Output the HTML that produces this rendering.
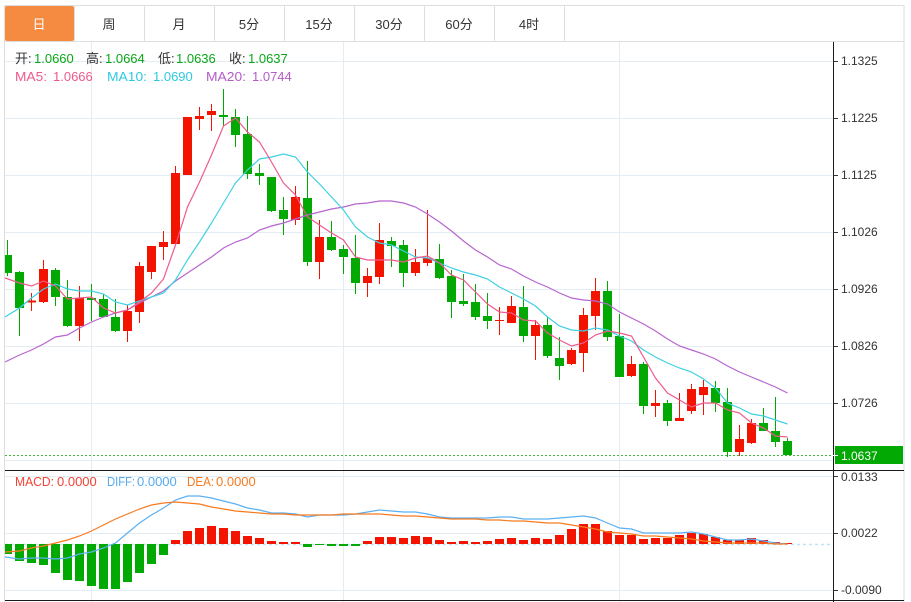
<!DOCTYPE html>
<html><head><meta charset="utf-8"><style>
html,body{margin:0;padding:0;background:#fff;width:911px;height:602px;overflow:hidden}
svg{display:block}
text{font-family:"Liberation Sans","Noto Sans CJK SC",sans-serif}
</style></head><body>
<svg width="911" height="602" viewBox="0 0 911 602" xmlns="http://www.w3.org/2000/svg">
<defs><clipPath id="c"><rect x="5" y="42" width="828" height="560"/></clipPath></defs>
<rect width="911" height="602" fill="#fff"/>
<!-- grid -->
<path d="M5 61.5H833M5 118.5H833M5 175.5H833M5 232.5H833M5 289.5H833M5 346.5H833M5 403.5H833M5 460.5H833M5 476.5H833M5 533.5H833M5 590.5H833M91.5 42V602M343.5 42V602M619.5 42V602" stroke="#e4edf3" stroke-width="1" fill="none"/>
<!-- frame -->
<path d="M4.5 5V602M904 5V602M4 5.5H904M4 41.5H904" stroke="#dedede" fill="none"/>
<rect x="5" y="6" width="69" height="35" rx="2" fill="#f58b40"/>
<path d="M74.5 6V41M144.5 6V41M214.5 6V41M284.5 6V41M354.5 6V41M424.5 6V41M494.5 6V41M564.5 6V41" stroke="#dedede" fill="none"/>
<g font-size="13" fill="#333" text-anchor="middle">
<text x="39" y="29" fill="#fff">日</text><text x="109" y="29">周</text><text x="179" y="29">月</text><text x="249" y="29">5分</text><text x="319" y="29">15分</text><text x="389" y="29">30分</text><text x="459" y="29">60分</text><text x="529" y="29">4时</text>
</g>
<g clip-path="url(#c)">
<!-- red wicks -->
<path fill="none" stroke="#f31400" d="M31.5 293V311M43.5 260V303M79.5 286V341M127.5 305V342M139.5 262V323M151.5 246V279M163.5 231V260M175.5 166V244M199.5 107V130M211.5 104V131M295.5 186V225M319.5 220V279M367.5 268V297M379.5 223V284M415.5 249V276M427.5 210V266M499.5 307V335M511.5 296V323M535.5 320V360M571.5 348V365M583.5 308V372M595.5 278V330M631.5 356V377M655.5 390V417M679.5 393V421M691.5 384V414M703.5 380V415M739.5 425V456M751.5 419V444"/>
<!-- green wicks -->
<path fill="none" stroke="#03a903" d="M7.5 240V276M19.5 271V336M55.5 268V306M67.5 280V327M91.5 284V321M103.5 294V317M115.5 299V332M223.5 89V126M235.5 109V147M247.5 116V179M259.5 164V185M271.5 177V212M283.5 197V235M307.5 161V266M331.5 221V251M343.5 245V274M355.5 235V294M391.5 237V267M403.5 240V287M439.5 244V279M451.5 270V318M463.5 274V306M475.5 284V320M487.5 293V329M523.5 286V342M547.5 317V358M559.5 337V380M607.5 281V341M619.5 314V377M643.5 362V414M667.5 400V426M715.5 381V412M727.5 388V457M763.5 408V431M775.5 397V447M787.5 438V455"/>
<!-- red bodies -->
<path fill="#f31400" d="M27 300.5h9v2h-9zM39 269h9v33h-9zM75 298h9v28h-9zM123 311h9v20h-9zM135 266h9v46h-9zM147 246h9v26h-9zM159 242h9v5h-9zM171 173h9v71h-9zM183 117h9v58h-9zM195 116h9v3h-9zM207 111h9v4h-9zM291 197h9v23h-9zM315 237h9v25h-9zM363 276h9v7h-9zM375 240h9v37h-9zM411 262h9v11h-9zM423 258h9v5h-9zM495 320h9v1h-9zM507 306h9v17h-9zM531 325h9v11h-9zM567 350h9v14h-9zM579 315h9v38h-9zM591 291h9v25h-9zM627 364h9v12h-9zM651 403h9v3h-9zM675 418h9v3h-9zM687 389h9v22h-9zM699 387h9v8h-9zM735 439h9v13h-9zM747 423h9v20h-9z"/>
<!-- green bodies -->
<path fill="#03a903" d="M5 255h7v18h-7zM15 272h9v36h-9zM51 270h9v27h-9zM63 297h9v29h-9zM87 298h9v2h-9zM99 299h9v18h-9zM111 317h9v14h-9zM219 115h9v2h-9zM231 117h9v18h-9zM243 134h9v40h-9zM255 173h9v3h-9zM267 177h9v34h-9zM279 210h9v9h-9zM303 198h9v64h-9zM327 237h9v13h-9zM339 249h9v8h-9zM351 258h9v25h-9zM387 241h9v5h-9zM399 245h9v28h-9zM435 259h9v19h-9zM447 276h9v26h-9zM459 301h9v3h-9zM471 302h9v15h-9zM483 316h9v5h-9zM519 307h9v29h-9zM543 325h9v31h-9zM555 358h9v8h-9zM603 291h9v46h-9zM615 336h9v41h-9zM639 364h9v42h-9zM663 403h9v18h-9zM711 388h9v15h-9zM723 402h9v50h-9zM759 423h9v8h-9zM771 431h9v11h-9zM783 441h9v14h-9z"/>
<!-- MA20 -->
<polyline fill="none" stroke="#b765cf" stroke-width="1.2" points="5,362 19.5,355 31.5,350 43.5,344 55.5,337 67.5,335 79.5,328 91.5,322 103.5,317 115.5,313 127.5,310 139.5,303 151.5,297 163.5,291 175.5,281 187.5,273 199.5,265 211.5,257 223.5,248 235.5,242 247.5,238 259.5,230 271.5,226 283.5,223 295.5,219 307.5,215 319.5,212 331.5,209 343.5,207 355.5,204 367.5,203 379.5,201 391.5,201 403.5,203 415.5,207 427.5,214 439.5,222 451.5,231 463.5,241 475.5,250 487.5,257 499.5,265 511.5,269 523.5,276 535.5,282 547.5,287 559.5,293 571.5,298 583.5,300 595.5,301 607.5,304 619.5,312 631.5,318 643.5,324 655.5,331 667.5,339 679.5,346 691.5,350 703.5,354 715.5,359 727.5,366 739.5,372 751.5,377 763.5,382 775.5,387 787.5,393"/>
<!-- MA10 -->
<polyline fill="none" stroke="#3fd0e4" stroke-width="1.2" points="5,317 19.5,308 31.5,298 43.5,289 55.5,284 67.5,289 79.5,291 91.5,291 103.5,294 115.5,302 127.5,305 139.5,301 151.5,297 163.5,293 175.5,280 187.5,260 199.5,242 211.5,223 223.5,203 235.5,183 247.5,170 259.5,159 271.5,157 283.5,154 295.5,157 307.5,172 319.5,184 331.5,197 343.5,210 355.5,227 367.5,237 379.5,243 391.5,245 403.5,251 415.5,257 427.5,258 439.5,263 451.5,268 463.5,272 475.5,275 487.5,279 499.5,287 511.5,293 523.5,299 535.5,306 547.5,317 559.5,326 571.5,330 583.5,331 595.5,328 607.5,330 619.5,336 631.5,341 643.5,350 655.5,357 667.5,363 679.5,368 691.5,372 703.5,379 715.5,388 727.5,403 739.5,408 751.5,414 763.5,416 775.5,420 787.5,424"/>
<!-- MA5 -->
<polyline fill="none" stroke="#ee5a8d" stroke-width="1.2" points="5,278 19.5,283 31.5,286 43.5,281 55.5,286 67.5,299 79.5,298 91.5,297 103.5,308 115.5,313 127.5,310 139.5,302 151.5,293 163.5,279 175.5,245 187.5,207 199.5,182 211.5,155 223.5,126 235.5,118 247.5,132 259.5,142 271.5,162 283.5,183 295.5,195 307.5,217 319.5,225 331.5,233 343.5,240 355.5,257 367.5,260 379.5,260 391.5,260 403.5,262 415.5,258 427.5,256 439.5,263 451.5,275 463.5,280 475.5,292 487.5,304 499.5,312 511.5,313 523.5,320 535.5,321 547.5,333 559.5,340 571.5,346 583.5,343 595.5,335 607.5,331 619.5,333 631.5,336 643.5,357 655.5,378 667.5,393 679.5,400 691.5,407 703.5,403 715.5,403 727.5,410 739.5,413 751.5,423 763.5,428 775.5,436 787.5,437"/>
<!-- current price line -->
<path d="M5 455.5H833" stroke="#3fb83f" stroke-width="1" stroke-dasharray="2 2" fill="none"/>
<!-- MACD baseline -->
<path d="M5 544.5H830" stroke="#bfe4f3" stroke-width="1.5" stroke-dasharray="3 3" fill="none"/>
<!-- MACD bars -->
<path fill="#03a903" d="M5 544h7v10h-7zM15 544h9v17h-9zM27 544h9v19h-9zM39 544h9v21h-9zM51 544h9v29h-9zM63 544h9v36h-9zM75 544h9v37h-9zM87 544h9v42h-9zM99 544h9v45h-9zM111 544h9v45h-9zM123 544h9v38h-9zM135 544h9v29h-9zM147 544h9v20h-9zM159 544h9v11h-9zM303 544h9v3h-9zM315 544h9v1h-9zM327 544h9v2h-9zM339 544h9v2h-9zM351 544h9v2h-9z"/>
<path fill="#f31400" d="M171 540h9v4h-9zM183 531h9v13h-9zM195 528h9v16h-9zM207 526h9v18h-9zM219 528h9v16h-9zM231 531h9v13h-9zM243 536h9v8h-9zM255 538h9v6h-9zM267 541h9v3h-9zM279 542h9v2h-9zM291 542h9v2h-9zM363 541h9v3h-9zM375 537h9v7h-9zM387 537h9v7h-9zM399 538h9v6h-9zM411 536h9v8h-9zM423 537h9v7h-9zM435 540h9v4h-9zM447 542h9v2h-9zM459 541h9v3h-9zM471 542h9v2h-9zM483 541h9v3h-9zM495 539h9v5h-9zM507 538h9v6h-9zM519 540h9v4h-9zM531 538h9v6h-9zM543 539h9v5h-9zM555 535h9v9h-9zM567 529h9v15h-9zM579 524h9v20h-9zM591 524h9v20h-9zM603 531h9v13h-9zM615 535h9v9h-9zM627 535h9v9h-9zM639 539h9v5h-9zM651 538h9v6h-9zM663 538h9v6h-9zM675 535h9v9h-9zM687 533h9v11h-9zM699 534h9v10h-9zM711 537h9v7h-9zM723 540h9v4h-9zM735 540h9v4h-9zM747 538h9v6h-9zM759 540h9v4h-9zM771 542h9v2h-9zM783 543h9v1h-9z"/>
<!-- DIFF -->
<polyline fill="none" stroke="#5cb0f2" stroke-width="1.2" points="5,557 19.5,559 31.5,558 43.5,558 55.5,559 67.5,558 79.5,554 91.5,552 103.5,548 115.5,543 127.5,533 139.5,523 151.5,515 163.5,508 175.5,500 187.5,496 199.5,496 211.5,498 223.5,501 235.5,504 247.5,508 259.5,510 271.5,513 283.5,513 295.5,514 307.5,517 319.5,515 331.5,515 343.5,515 355.5,514 367.5,512 379.5,510 391.5,511 403.5,512 415.5,512 427.5,514 439.5,517 451.5,518 463.5,518 475.5,518 487.5,518 499.5,517 511.5,517 523.5,519 535.5,519 547.5,519 559.5,518 571.5,517 583.5,516 595.5,518 607.5,523 619.5,528 631.5,529 643.5,533 655.5,533 667.5,533 679.5,533 691.5,532 703.5,534 715.5,537 727.5,540 739.5,540 751.5,539 763.5,541 775.5,543 787.5,544"/>
<!-- DEA -->
<polyline fill="none" stroke="#f87a1e" stroke-width="1.2" points="5,552 19.5,551 31.5,548 43.5,546 55.5,543 67.5,540 79.5,536 91.5,531 103.5,525 115.5,519 127.5,514 139.5,509 151.5,505 163.5,503 175.5,502 187.5,503 199.5,504 211.5,507 223.5,509 235.5,511 247.5,512 259.5,513 271.5,514 283.5,514 295.5,515 307.5,515 319.5,515 331.5,515 343.5,514 355.5,514 367.5,514 379.5,514 391.5,515 403.5,516 415.5,516 427.5,517 439.5,518 451.5,519 463.5,519 475.5,519 487.5,520 499.5,520 511.5,521 523.5,521 535.5,522 547.5,523 559.5,523 571.5,525 583.5,527 595.5,529 607.5,532 619.5,533 631.5,534 643.5,536 655.5,536 667.5,537 679.5,538 691.5,539 703.5,541 715.5,542 727.5,543 739.5,543 751.5,543 763.5,543 775.5,544 787.5,544"/>
</g>
<!-- info text -->
<g font-size="13">
<text x="15" y="63" fill="#333">开:</text><text x="34" y="63" fill="#09a818">1.0660</text>
<text x="86" y="63" fill="#333">高:</text><text x="105" y="63" fill="#09a818">1.0664</text>
<text x="158" y="63" fill="#333">低:</text><text x="176" y="63" fill="#09a818">1.0636</text>
<text x="229" y="63" fill="#333">收:</text><text x="248" y="63" fill="#09a818">1.0637</text>
<text x="15" y="81" fill="#ee5a8d" textLength="32" lengthAdjust="spacingAndGlyphs">MA5:</text><text x="53" y="81" fill="#ee5a8d">1.0666</text>
<text x="107" y="81" fill="#2fc9e0" textLength="40" lengthAdjust="spacingAndGlyphs">MA10:</text><text x="153" y="81" fill="#2fc9e0">1.0690</text>
<text x="206" y="81" fill="#b35cc8" textLength="40" lengthAdjust="spacingAndGlyphs">MA20:</text><text x="252" y="81" fill="#b35cc8">1.0744</text>
<text x="15" y="486" fill="#f44336" textLength="39" lengthAdjust="spacingAndGlyphs">MACD:</text><text x="57" y="486" fill="#f44336">0.0000</text>
<text x="107" y="486" fill="#55aaf0" textLength="28" lengthAdjust="spacingAndGlyphs">DIFF:</text><text x="137" y="486" fill="#55aaf0">0.0000</text>
<text x="187" y="486" fill="#f87a1e" textLength="27" lengthAdjust="spacingAndGlyphs">DEA:</text><text x="216" y="486" fill="#f87a1e">0.0000</text>
</g>
<!-- axis -->
<path d="M833.5 42V602M5 470.5H904M5 600.5H904" stroke="#1a1a1a" fill="none"/>
<path d="M833 61.5h5M833 118.5h5M833 175.5h5M833 232.5h5M833 289.5h5M833 346.5h5M833 403.5h5M833 476.5h5M833 533.5h5M833 590.5h5" stroke="#333" fill="none"/>
<g font-size="12" fill="#333">
<text x="841" y="65">1.1325</text><text x="841" y="122">1.1225</text><text x="841" y="179">1.1125</text><text x="841" y="236">1.1026</text><text x="841" y="293">1.0926</text><text x="841" y="350">1.0826</text><text x="841" y="407">1.0726</text><text x="841" y="464">1.0626</text>
<text x="841" y="481">0.0133</text><text x="841" y="537">0.0022</text><text x="841" y="594">-0.0090</text>
</g>
<rect x="835" y="446" width="68" height="18" fill="#03a903"/>
<path d="M833 455.5h5" stroke="#fff" fill="none"/>
<text x="841" y="460" font-size="12" fill="#fff">1.0637</text>
</svg>
</body></html>
